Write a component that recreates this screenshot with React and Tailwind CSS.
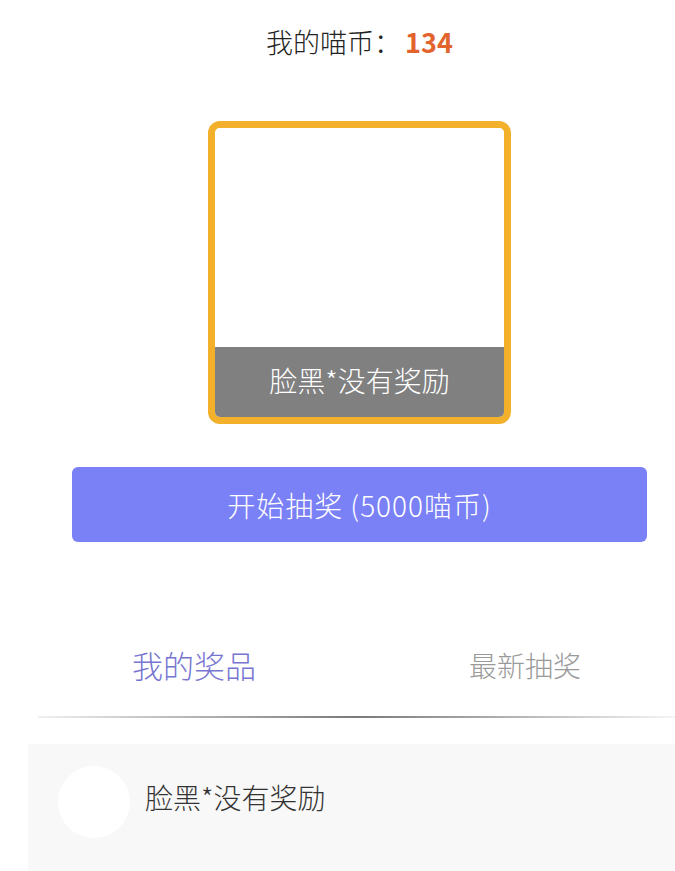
import React from "react";

const font = { fontFamily: '"Noto Sans CJK SC", "Noto Sans", sans-serif' };

export default function App() {
  return (
    <div className="w-[675px] h-[871px] bg-white overflow-hidden font-light" style={font}>
      <div className="flex flex-col items-center pl-[44px]">
        <div className="mt-[24px] h-[36px] flex items-center text-[27px] leading-[36px] text-[#222]">
          <span>我的喵币：</span>
          <span className="text-[#e2632c] font-bold ml-[4px]">134</span>
        </div>
        <div className="mt-[61px] w-[303px] h-[303px] border-[7px] border-[#f2b02b] rounded-[12px] overflow-hidden flex flex-col bg-white">
          <div className="flex-1 bg-white" />
          <div className="h-[70px] pb-[5px] bg-[#808080] flex items-center justify-center text-white text-[28px]">
            脸黑*没有奖励
          </div>
        </div>
        <div className="mt-[43px] w-[575px] h-[75px] rounded-[6px] bg-[#7a80f5] flex items-center justify-center text-white text-[28px] tracking-[1px]">
          开始抽奖 (5000喵币)
        </div>
      </div>
      <div className="mt-[93px] flex h-[60px] items-center">
        <div className="shrink-0 ml-[40px] w-[308px] flex justify-center text-[31px] text-[#7775d0]">我的奖品</div>
        <div className="shrink-0 w-[354px] flex justify-center text-[28px] text-[#9a9a9a]">最新抽奖</div>
      </div>
      <div className="mt-[21px] ml-[38px] h-[2px] bg-gradient-to-r from-[#f0f0f0] via-[#7a7a7a] to-[#f4f4f4]" />
      <div className="mt-[26px] ml-[28px] h-[140px] bg-[#f8f8f8] flex items-start">
        <div className="shrink-0 mt-[22px] ml-[30px] w-[72px] h-[72px] rounded-full bg-white" />
        <div className="ml-[15px] mt-[35px] text-[28px] leading-[36px] text-[#333]">脸黑*没有奖励</div>
      </div>
    </div>
  );
}
